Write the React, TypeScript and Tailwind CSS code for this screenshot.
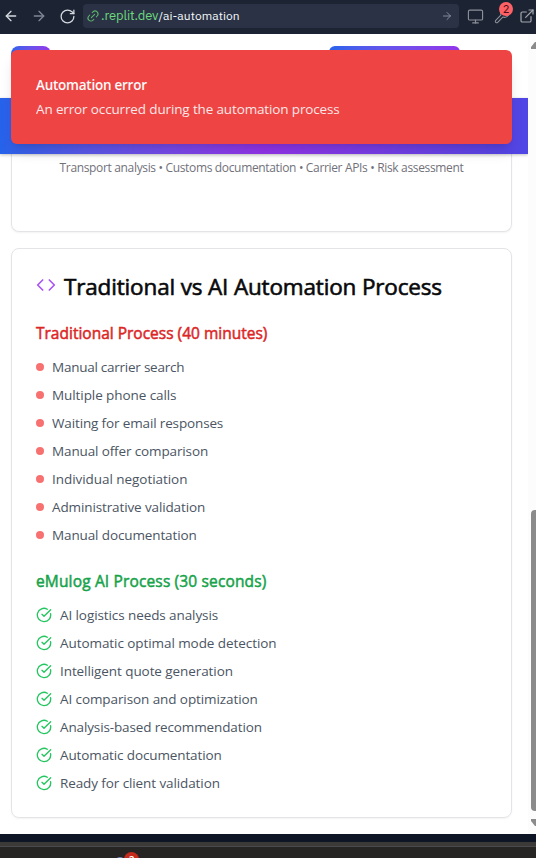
import React from "react";
import { ArrowLeft, ArrowRight, RotateCw, Link2, Monitor, Wrench, ExternalLink, Code, CircleCheckBig } from "lucide-react";

const traditional = [
  { text: "Manual carrier search", tracking: "tracking-[-0.25px]" },
  { text: "Multiple phone calls", tracking: "tracking-[-0.08px]" },
  { text: "Waiting for email responses", tracking: "tracking-[-0.14px]" },
  { text: "Manual offer comparison", tracking: "tracking-[-0.13px]" },
  { text: "Individual negotiation", tracking: "tracking-[-0.05px]" },
  { text: "Administrative validation", tracking: "tracking-[-0.12px]" },
  { text: "Manual documentation", tracking: "tracking-[-0.12px]" },
];

const automated = [
  { text: "AI logistics needs analysis", tracking: "tracking-[-0.09px]" },
  { text: "Automatic optimal mode detection", tracking: "tracking-[-0.07px]" },
  { text: "Intelligent quote generation", tracking: "tracking-[-0.08px]" },
  { text: "AI comparison and optimization", tracking: "tracking-[-0.09px]" },
  { text: "Analysis-based recommendation", tracking: "tracking-[-0.13px]" },
  { text: "Automatic documentation", tracking: "tracking-[-0.12px]" },
  { text: "Ready for client validation", tracking: "tracking-[-0.1px]" },
];

function BrowserBar() {
  return (
    <div className="flex h-[34px] shrink-0 items-center bg-[#1c2333] pb-[2px] text-[#c2c8cc]">
      <ArrowLeft size={16} strokeWidth={2} className="ml-[3px] shrink-0 text-[#d5dae0]" />
      <ArrowRight size={16} strokeWidth={2} className="ml-[12px] shrink-0 text-[#7f8794]" />
      <RotateCw size={17} strokeWidth={1.8} className="ml-[12px] shrink-0 text-[#d5dae0]" />
      <div className="ml-[7px] flex h-6 w-[376px] shrink-0 items-center rounded-[4px] bg-[#2b3245] pl-[3px] pr-1.5 font-['IBM_Plex_Sans','Inter',sans-serif] text-[13px]">
        <Link2 size={14} strokeWidth={1.8} className="-rotate-45 text-[#5cb46c]" />
        <span className="ml-px tracking-[-0.1px] text-[#6cd97e]">.replit.dev</span>
        <span className="text-[12px] tracking-[0.06px] text-[#f5f9fc]">/ai-automation</span>
        <ArrowRight size={12} strokeWidth={1.8} className="ml-auto text-[#8d95a5]" />
      </div>
      <Monitor size={17} strokeWidth={1.6} className="ml-[8px] shrink-0 text-[#8d9199]" />
      <div className="relative ml-[10px] shrink-0">
        <Wrench size={16} strokeWidth={1.6} className="text-[#8d9199]" />
        <span className="absolute -top-[6px] left-[5px] flex size-[14px] items-center justify-center rounded-full bg-[#ff6166] font-['Inter',sans-serif] text-[11px] leading-none text-[#4a0f14]">2</span>
      </div>
      <ExternalLink size={16} strokeWidth={1.8} className="ml-[9px] shrink-0 text-[#a3a8ae]" />
    </div>
  );
}

function Toast() {
  return (
    <div className="absolute left-[11px] top-4 flex h-[94px] w-[501px] flex-col justify-center rounded-md bg-[#ef4444] px-[25px] text-sm text-[#fafafa] shadow-[0_10px_15px_-3px_rgba(0,0,0,0.12),0_4px_6px_-4px_rgba(0,0,0,0.12)]">
      <div className="h-6 whitespace-nowrap text-[13.5px] font-semibold leading-6 tracking-[-0.25px]">Automation error</div>
      <div className="h-6 whitespace-nowrap text-[13.5px] leading-6 tracking-[-0.14px] opacity-90">An error occurred during the automation process</div>
    </div>
  );
}

function Scrollbar() {
  return (
    <div className="relative flex w-2 shrink-0 flex-col items-end overflow-hidden bg-[#fcfcfc]">
      <svg className="absolute left-[3px] top-[8px]" width="10" height="7" viewBox="0 0 10 7"><path d="M0 7V5L4 0H7L10 5V7Z" fill="#8b8b8b" /></svg>
      <div className="mt-[476px] h-[301px] w-[5px] shrink-0 rounded-l-[4px] bg-[#8b8b8b]" />
      <svg className="absolute left-[3px] top-[785px]" width="10" height="7" viewBox="0 0 10 7"><path d="M0 0V2L4 7H7L10 2V0Z" fill="#8b8b8b" /></svg>
    </div>
  );
}

export default function App() {
  return (
    <div className="flex h-[858px] w-[536px] flex-col overflow-hidden bg-white font-['Open_Sans','Noto_Sans',sans-serif]">
      <BrowserBar />
      <div className="relative flex h-[800px] shrink-0">
        <main className="flex w-[528px] shrink-0 flex-col">
          <header className="flex h-16 shrink-0 justify-between pl-[11px] pr-[68px] pt-3">
            <div className="h-10 w-10 rounded-lg bg-linear-to-r from-[#2563eb] to-[#9333ea]" />
            <div className="h-9 w-[131px] rounded-md bg-linear-to-r from-[#2563eb] to-[#9333ea]" />
          </header>
          <div className="z-0 h-14 shrink-0 bg-linear-to-r from-[#2563eb] via-[#9333ea] to-[#4f46e5] shadow-[0_1px_3px_rgba(0,0,0,0.25)]" />
          <section className="ml-[11px] mr-4 h-[78px] shrink-0 rounded-b-lg border border-t-0 border-[#e4e4e7] pt-1 text-center shadow-[0_1px_2px_rgba(0,0,0,0.05)]">
            <p className="whitespace-nowrap text-[12px] leading-5 tracking-[-0.34px] text-[#71717a]">Transport analysis • Customs documentation • Carrier APIs • Risk assessment</p>
          </section>
          <section className="ml-[11px] mr-4 mt-4 h-[570px] shrink-0 rounded-lg border border-[#e4e4e7] px-6 pt-[22px] shadow-[0_1px_2px_rgba(0,0,0,0.05)]">
            <h2 className="flex h-8 items-center whitespace-nowrap text-[22.5px] leading-8 tracking-[-0.16px] text-[#09090b]">
              <Code size={20} strokeWidth={2} className="mr-2 shrink-0 -translate-y-0.5 text-[#a855f7]" />
              <span className="[-webkit-text-stroke:0.6px_#09090b]">Traditional vs AI Automation Process</span>
            </h2>
            <h3 className="mt-[18px] h-6 whitespace-nowrap text-[15.5px] leading-6 tracking-[0px] text-[#dc2626] [-webkit-text-stroke:0.5px_#dc2626]">Traditional Process (40 minutes)</h3>
            <ul className="mt-3 flex flex-col gap-2">
              {traditional.map((item) => (
                <li key={item.text} className="flex h-5 items-center whitespace-nowrap text-[13.5px] leading-5 text-[#4b5563]">
                  <span className="mr-2 size-2 shrink-0 rounded-full bg-[#f87171]" />
                  <span className={item.tracking}>{item.text}</span>
                </li>
              ))}
            </ul>
            <h3 className="mt-6 h-6 whitespace-nowrap text-[15.5px] leading-6 tracking-[0.15px] text-[#16a34a] [-webkit-text-stroke:0.5px_#16a34a]">eMulog AI Process (30 seconds)</h3>
            <ul className="mt-3 flex flex-col gap-2">
              {automated.map((item) => (
                <li key={item.text} className="flex h-5 items-center whitespace-nowrap text-[13.5px] leading-5 text-[#4b5563]">
                  <CircleCheckBig size={16} strokeWidth={2} className="mr-2 shrink-0 text-[#22c55e]" />
                  <span className={item.tracking}>{item.text}</span>
                </li>
              ))}
            </ul>
          </section>
        </main>
        <Scrollbar />
        <Toast />
      </div>
      <div className="h-2 shrink-0 bg-[#0e1525]" />
      <div className="h-[5px] shrink-0 border-b border-[#4a4a4a] bg-[#3b3a39]" />
      <footer className="relative h-[11px] shrink-0 overflow-hidden bg-[#272524]">
        <span className="absolute left-[116px] top-[10px] h-2 w-2 rounded-full bg-[#7b83b8]" />
        <span className="absolute left-[124px] top-[5px] flex size-[15px] items-start justify-center rounded-full bg-[#c42b1c] pt-[3px] text-[10px] font-semibold leading-none text-white">2</span>
      </footer>
    </div>
  );
}
